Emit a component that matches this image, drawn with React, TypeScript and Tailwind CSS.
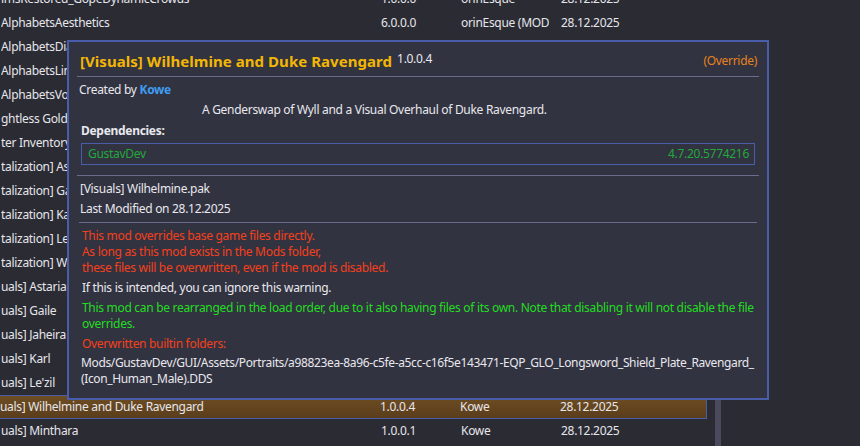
import React from 'react';

interface ModRow {
  name: string;
  version: string;
  author: string;
  date: string;
  selected?: boolean;
}

const rows: ModRow[] = [
  { name: 'lmsRestored_GopeDynamicCrowds', version: '1.0.0.0', author: 'orinEsque', date: '28.12.2025' },
  { name: 'AlphabetsAesthetics', version: '6.0.0.0', author: 'orinEsque (MOD)', date: '28.12.2025' },
  { name: 'AlphabetsDialogue', version: '6.0.0.0', author: 'orinEsque (MOD)', date: '28.12.2025' },
  { name: 'AlphabetsLingua', version: '6.0.0.0', author: 'orinEsque (MOD)', date: '28.12.2025' },
  { name: 'AlphabetsVoice', version: '6.0.0.0', author: 'orinEsque (MOD)', date: '28.12.2025' },
  { name: 'ghtless Gold', version: '1.0.0.0', author: 'Kowe', date: '28.12.2025' },
  { name: 'ter Inventory', version: '1.0.0.0', author: 'Kowe', date: '28.12.2025' },
  { name: 'talization] Astarion', version: '1.0.0.0', author: 'Kowe', date: '28.12.2025' },
  { name: 'talization] Gale', version: '1.0.0.0', author: 'Kowe', date: '28.12.2025' },
  { name: 'talization] Karlach', version: '1.0.0.0', author: 'Kowe', date: '28.12.2025' },
  { name: "talization] Le'zil", version: '1.0.0.0', author: 'Kowe', date: '28.12.2025' },
  { name: 'talization] Wilhelmine', version: '1.0.0.0', author: 'Kowe', date: '28.12.2025' },
  { name: 'uals] Astaria', version: '1.0.0.0', author: 'Kowe', date: '28.12.2025' },
  { name: 'uals] Gaile', version: '1.0.0.0', author: 'Kowe', date: '28.12.2025' },
  { name: 'uals] Jaheira', version: '1.0.0.0', author: 'Kowe', date: '28.12.2025' },
  { name: 'uals] Karl', version: '1.0.0.0', author: 'Kowe', date: '28.12.2025' },
  { name: "uals] Le'zil", version: '1.0.0.0', author: 'Kowe', date: '28.12.2025' },
  { name: 'uals] Wilhelmine and Duke Ravengard', version: '1.0.0.4', author: 'Kowe', date: '28.12.2025', selected: true },
  { name: 'uals] Minthara', version: '1.0.0.1', author: 'Kowe', date: '28.12.2025' },
];

function ModListRow({ row }: { row: ModRow }) {
  return (
    <div
      className={
        row.selected
          ? 'flex h-[24px] items-center border border-l-0 border-[#4a5dab] bg-gradient-to-b from-[#6e4d22] to-[#5a3d1c]'
          : 'flex h-[24px] items-center border border-transparent'
      }
    >
      <div className="w-[380px] shrink-0 overflow-hidden whitespace-nowrap">{row.name}</div>
      <div className="w-[80px] shrink-0">{row.version}</div>
      <div className="w-[88px] shrink-0 overflow-hidden whitespace-nowrap">{row.author}</div>
      <div className="ml-[12px]">{row.date}</div>
    </div>
  );
}

function Divider() {
  return <div className="h-px bg-[#6b6b8b]" />;
}

function ModTooltip() {
  return (
    <div className="absolute left-[67px] top-[40px] h-[360px] w-[702px] border-2 border-[#4a5dab] bg-[#323340] px-[8px] text-[#e8e8ee]">
      <div className="flex items-start justify-between pl-[3px] pr-[2px] pt-[10px]">
        <div className="flex items-start">
          <span className="text-[15px] font-bold leading-[18px] tracking-[0.05px] text-[#f2b705]">
            [Visuals] Wilhelmine and Duke Ravengard
          </span>
          <span className="ml-[5px] text-[12px] leading-[14px]">1.0.0.4</span>
        </div>
        <span className="mt-[1px] leading-[16px] text-[#e8821e]">(Override)</span>
      </div>
      <div className="mt-[6px]">
        <Divider />
      </div>

      <div className="mt-[5px] pl-[2px] leading-[16px]">
        Created by <span className="font-bold text-[#3f9cf0]">Kowe</span>
      </div>
      <div className="mt-[4px] pl-[125px] leading-[16px]">
        A Genderswap of Wyll and a Visual Overhaul of Duke Ravengard.
      </div>
      <div className="mt-[5px] pl-[4px] font-bold leading-[16px]">Dependencies:</div>
      <div className="mx-[4px] mt-[4px] flex h-[22px] items-center justify-between border border-[#4a5dab] pl-[6px] pr-[5px] text-[#22a83c]">
        <span>GustavDev</span>
        <span>4.7.20.5774216</span>
      </div>

      <div className="mt-[10px]">
        <Divider />
      </div>
      <div className="mt-[5px] pl-[3px] leading-[16px]">[Visuals] Wilhelmine.pak</div>
      <div className="mt-[4px] pl-[3px] leading-[16px]">Last Modified on 28.12.2025</div>
      <div className="ml-[2px] mr-[2px] mt-[5px]">
        <Divider />
      </div>

      <div className="mt-[5px] pl-[5px] leading-[16px] text-[#f5401c]">
        <div>This mod overrides base game files directly.</div>
        <div>As long as this mod exists in the Mods folder,</div>
        <div>these files will be overwritten, even if the mod is disabled.</div>
      </div>
      <div className="mt-[4px] pl-[5px] leading-[16px]">If this is intended, you can ignore this warning.</div>
      <div className="mt-[4px] pl-[5px] leading-[16px] text-[#22dd22]">
        This mod can be rearranged in the load order, due to it also having files of its own. Note that disabling it will not disable the file overrides.
      </div>
      <div className="mt-[4px] pl-[5px] leading-[16px] text-[#f5401c]">Overwritten builtin folders:</div>
      <div className="mt-[3px] whitespace-nowrap pl-[4px] leading-[16px] tracking-[-0.36px]">
        <div>Mods/GustavDev/GUI/Assets/Portraits/a98823ea-8a96-c5fe-a5cc-c16f5e143471-EQP_GLO_Longsword_Shield_Plate_Ravengard_</div>
        <div>(Icon_Human_Male).DDS</div>
      </div>
    </div>
  );
}

export default function App() {
  return (
    <div
      className="relative h-[446px] w-[860px] overflow-hidden bg-[#2b2b34] text-[12px] tracking-[-0.3px] text-[#e6e6ea]"
      style={{ fontFamily: '"Noto Sans", "Open Sans", sans-serif' }}
    >
      <div className="flex h-full">
        <div className="-mt-[13px] w-[707px] shrink-0">
          {rows.map((row) => (
            <ModListRow key={row.name} row={row} />
          ))}
        </div>
        <div className="ml-[8px] flex h-full w-[6px] flex-col">
          <div className="h-[220px]" />
          <div className="flex-1 bg-[#4a4a5c]" />
        </div>
      </div>
      <ModTooltip />
    </div>
  );
}
